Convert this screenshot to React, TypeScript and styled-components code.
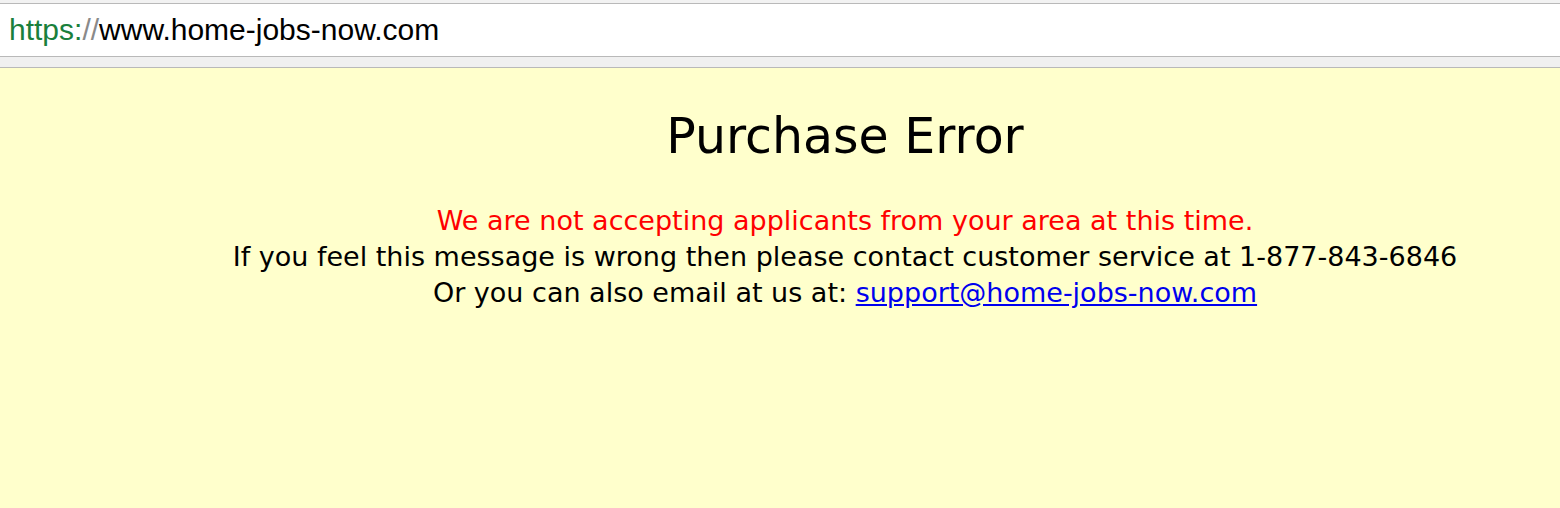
import React from 'react';
import styled, { createGlobalStyle } from 'styled-components';

const GlobalStyle = createGlobalStyle`
  html, body {
    margin: 0;
    padding: 0;
    background: #ffffcc;
  }
`;

const Page = styled.div`
  width: 1560px;
  height: 508px;
  display: flex;
  flex-direction: column;
  overflow: hidden;
`;

const TopEdge = styled.div`
  height: 3px;
  background: #f2f2f2;
  border-bottom: 1px solid #b9b9b9;
`;

const AddressBar = styled.div`
  height: 52px;
  background: #ffffff;
  display: flex;
  align-items: center;
  padding-left: 9px;
  font-family: 'Liberation Sans', Arial, sans-serif;
  font-size: 30px;
  color: #000;
  border-bottom: 1px solid #b9b9b9;
`;

const Scheme = styled.span`
  color: #1a7f3c;
`;

const Slashes = styled.span`
  color: #8a8a8a;
`;

const Strip = styled.div`
  height: 10px;
  background: #f0f0f0;
  border-bottom: 1px solid #b9b9b9;
`;

const Content = styled.div`
  flex: 1;
  background: #ffffcc;
  padding-left: 130px;
  font-family: 'DejaVu Sans', Verdana, Tahoma, sans-serif;
  text-align: center;
`;

const Title = styled.h1`
  margin: 40px 0 0;
  font-weight: normal;
  font-size: 49px;
  line-height: 58px;
  color: #000;
`;

const Message = styled.div`
  margin-top: 37px;
  font-size: 27px;
  line-height: 36px;
  color: ${(p: { $tone?: 'alert' | 'plain' }) => (p.$tone === 'alert' ? '#ff0000' : '#000')};
`;

const Lines = styled.div`
  font-size: 27px;
  line-height: 36px;
  color: #000;
`;

const Mail = styled.a`
  color: #0000ee;
  text-decoration: underline;
`;

export default function App() {
  return (
    <>
      <GlobalStyle />
      <Page>
        <TopEdge />
        <AddressBar>
          <Scheme>https:</Scheme>
          <Slashes>//</Slashes>
          www.home-jobs-now.com
        </AddressBar>
        <Strip />
        <Content>
          <Title>Purchase Error</Title>
          <Message $tone="alert">We are not accepting applicants from your area at this time.</Message>
          <Lines>
            If you feel this message is wrong then please contact customer service at 1-877-843-6846
            <br />
            Or you can also email at us at: <Mail href="#">support@home-jobs-now.com</Mail>
          </Lines>
        </Content>
      </Page>
    </>
  );
}
